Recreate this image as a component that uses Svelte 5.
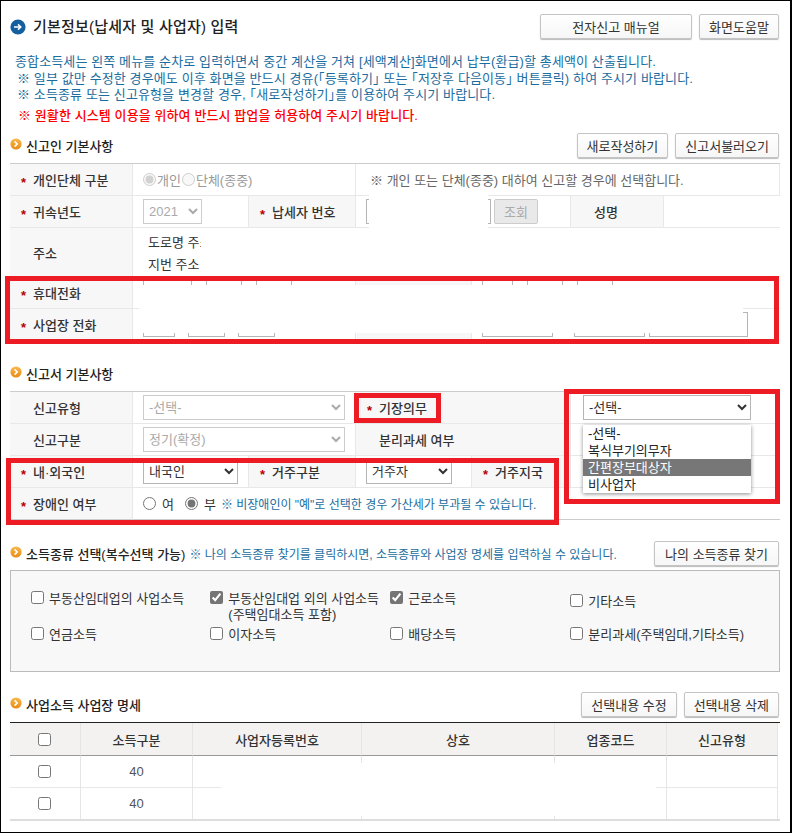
<script lang="ts">
  // overlays in page coordinates: blanked-out personal data and the red annotation frames
  const blanks = [
    { x: 369, y: 189, w: 119, h: 9 },
    { x: 369, y: 198, w: 119, h: 30 },
    { x: 201, y: 228, w: 579, h: 48 },
    { x: 139, y: 285, w: 604, h: 48 },
    { x: 221, y: 763, w: 435, h: 53 }
  ];
  const frames = [
    { x: 5, y: 276, w: 774, h: 68 },
    { x: 354, y: 393, w: 87, h: 30 },
    { x: 564, y: 389, w: 216, h: 115 },
    { x: 6, y: 458, w: 553, h: 67 }
  ];
  const kinds = [
    [
      { label: '부동산임대업의 사업소득', checked: false },
      { label: '부동산임대업 외의 사업소득', sub: '(주택임대소득 포함)', checked: true },
      { label: '근로소득', checked: true },
      { label: '기타소득', checked: false, low: true }
    ],
    [
      { label: '연금소득', checked: false },
      { label: '이자소득', checked: false },
      { label: '배당소득', checked: false },
      { label: '분리과세(주택임대,기타소득)', checked: false }
    ]
  ];
  const options = ['-선택-', '복식부기의무자', '간편장부대상자', '비사업자'];
  const headers = ['소득구분', '사업자등록번호', '상호', '업종코드', '신고유형'];
</script>

{#snippet bullet()}
  <svg class="bullet" width="12" height="12" viewBox="0 0 12 12">
    <defs>
      <linearGradient id="org" x1="0" y1="0" x2="0" y2="1">
        <stop offset="0" stop-color="#fbb84a" />
        <stop offset="1" stop-color="#e98a12" />
      </linearGradient>
    </defs>
    <circle cx="6" cy="6" r="5.6" fill="url(#org)" />
    <path d="M4.6 3.4 7.2 6 4.6 8.6" fill="none" stroke="#fff" stroke-width="1.6" />
  </svg>
{/snippet}

{#snippet star()}<span class="star">*</span>{/snippet}

<div class="page">
  <header class="top">
    <svg width="16" height="16" viewBox="0 0 16 16">
      <circle cx="8" cy="8" r="7.6" fill="#14609f" />
      <path d="M4 8h6.5M8 5.4 10.8 8 8 10.6" fill="none" stroke="#fff" stroke-width="1.5" />
    </svg>
    <h1>기본정보(납세자 및 사업자) 입력</h1>
    <button class="btn manual">전자신고 매뉴얼</button>
    <button class="btn help">화면도움말</button>
  </header>

  <div class="notes">
    <p class="first">종합소득세는 왼쪽 메뉴를 순차로 입력하면서 중간 계산을 거쳐 [세액계산]화면에서 납부(환급)할 총세액이 산출됩니다.</p>
    <p>※ 일부 값만 수정한 경우에도 이후 화면을 반드시 경유(｢등록하기｣ 또는 ｢저장후 다음이동｣ 버튼클릭) 하여 주시기 바랍니다.</p>
    <p>※ 소득종류 또는 신고유형을 변경할 경우, ｢새로작성하기｣를 이용하여 주시기 바랍니다.</p>
    <p class="warn">※ 원활한 시스템 이용을 위하여 반드시 팝업을 허용하여 주시기 바랍니다.</p>
  </div>

  <div class="sec">
    {@render bullet()}
    <h2>신고인 기본사항</h2>
    <span class="grow"></span>
    <button class="btn">새로작성하기</button>
    <button class="btn">신고서불러오기</button>
  </div>

  <table class="form">
    <colgroup><col class="c1" /><col class="c2" /><col class="c3" /><col class="c4" /><col class="c5" /><col class="c6" /><col class="c7" /></colgroup>
    <tbody>
      <tr>
        <th>{@render star()}개인단체 구분</th>
        <td colspan="2" class="off">
          <span class="radios">
            <input type="radio" name="who" checked disabled /><span>개인</span>
            <input type="radio" name="who" disabled /><span>단체(종중)</span>
          </span>
        </td>
        <td colspan="4" class="hint">※ 개인 또는 단체(종중) 대하여 신고할 경우에 선택합니다.</td>
      </tr>
      <tr>
        <th>{@render star()}귀속년도</th>
        <td><select class="year" disabled><option>2021</option></select></td>
        <th>{@render star()}납세자 번호</th>
        <td colspan="2">
          <div class="idrow">
            <input class="field idno" disabled />
            <button class="lookup" disabled>조회</button>
          </div>
        </td>
        <th class="plain">성명</th>
        <td class="last"></td>
      </tr>
      <tr class="addr">
        <th class="plain">주소</th>
        <td colspan="6" class="last">
          <div class="addrline">도로명 주소</div>
          <div class="addrline">지번 주소</div>
        </td>
      </tr>
      <tr>
        <th>{@render star()}휴대전화</th>
        <td colspan="2">
          <div class="phones">
            <input class="field w49" /><input class="field w36 g14" /><input class="field w36 g14" />
          </div>
        </td>
        <th></th>
        <td colspan="3" class="last">
          <div class="phones">
            <input class="field w31" /><input class="field w36 g14" /><input class="field w36 g14" />
          </div>
        </td>
      </tr>
      <tr>
        <th>{@render star()}사업장 전화</th>
        <td colspan="2">
          <div class="phones">
            <input class="field w32" /><input class="field w37 g13" /><input class="field w37 g13" />
          </div>
        </td>
        <th></th>
        <td colspan="3" class="last">
          <div class="phones">
            <input class="field w71" /><input class="field w71 g21" /><input class="field w99 g4" />
          </div>
        </td>
      </tr>
    </tbody>
  </table>

  <div class="sec second">
    {@render bullet()}
    <h2>신고서 기본사항</h2>
  </div>

  <table class="form closed">
    <colgroup><col class="c1" /><col class="c2" /><col class="c3" /><col class="c4" /><col class="c5" /><col class="c6" /><col class="c7" /></colgroup>
    <tbody>
      <tr>
        <th class="plain">신고유형</th>
        <td colspan="2"><select class="wide" disabled><option>-선택-</option></select></td>
        <th colspan="2">{@render star()}기장의무</th>
        <td colspan="2" class="last menu-cell">
          <select class="book"><option>-선택-</option></select>
          <ul class="menu">
            {#each options as opt, i}
              <li class:active={i === 2}>{opt}</li>
            {/each}
          </ul>
        </td>
      </tr>
      <tr>
        <th class="plain">신고구분</th>
        <td colspan="2"><select class="wide" disabled><option>정기(확정)</option></select></td>
        <th colspan="2" class="plain">분리과세 여부</th>
        <td colspan="2" class="last"></td>
      </tr>
      <tr>
        <th>{@render star()}내·외국인</th>
        <td><select class="nation"><option>내국인</option></select></td>
        <th>{@render star()}거주구분</th>
        <td><select class="resident"><option>거주자</option></select></td>
        <th>{@render star()}거주지국</th>
        <td colspan="2" class="last"></td>
      </tr>
      <tr>
        <th>{@render star()}장애인 여부</th>
        <td colspan="6" class="last">
          <div class="disabled-row">
            <input type="radio" name="dis" /><span class="lab">여</span>
            <input type="radio" name="dis" checked /><span class="lab">부</span>
            <span class="small-note">※ 비장애인이 "예"로 선택한 경우 가산세가 부과될 수 있습니다.</span>
          </div>
        </td>
      </tr>
    </tbody>
  </table>

  <div class="sec third">
    {@render bullet()}
    <h2>소득종류 선택(복수선택 가능)</h2>
    <span class="sec-note">※ 나의 소득종류 찾기를 클릭하시면, 소득종류와 사업장 명세를 입력하실 수 있습니다.</span>
    <span class="grow"></span>
    <button class="btn find">나의 소득종류 찾기</button>
  </div>

  <div class="kinds">
    {#each kinds as row}
      <div class="kind-row">
        {#each row as k}
          <label class="kind" class:low={k.low}>
            <input type="checkbox" checked={k.checked} />
            <span>{k.label}{#if k.sub}<br />{k.sub}{/if}</span>
          </label>
        {/each}
      </div>
    {/each}
  </div>

  <div class="sec fourth">
    {@render bullet()}
    <h2>사업소득 사업장 명세</h2>
    <span class="grow"></span>
    <button class="btn">선택내용 수정</button>
    <button class="btn">선택내용 삭제</button>
  </div>

  <div class="list-wrap">
    <table class="list">
      <colgroup><col class="l1" /><col class="l2" /><col class="l3" /><col class="l4" /><col class="l5" /><col class="l6" /></colgroup>
      <thead>
        <tr>
          <th class="check"><input type="checkbox" /></th>
          {#each headers as h}<th>{h}</th>{/each}
        </tr>
      </thead>
      <tbody>
        {#each [0, 1] as _}
          <tr>
            <td class="check"><input type="checkbox" /></td>
            <td>40</td>
            <td></td><td></td><td></td><td></td>
          </tr>
        {/each}
      </tbody>
    </table>
  </div>

  {#each blanks as b}
    <div class="blank" style="left:{b.x}px;top:{b.y}px;width:{b.w}px;height:{b.h}px"></div>
  {/each}
  {#each frames as f}
    <div class="frame" style="left:{f.x}px;top:{f.y}px;width:{f.w}px;height:{f.h}px"></div>
  {/each}
</div>

<style>
  :global(body) { margin: 0; background: #fff; }

  .page {
    position: relative;
    box-sizing: border-box;
    width: 792px;
    height: 833px;
    overflow: hidden;
    border: 1px solid #000;
    border-right-width: 2px;
    padding: 13px 0 0 9px;
    font-family: "Liberation Sans", "Noto Sans CJK KR", sans-serif;
    font-size: 13px;
    color: #333;
    accent-color: #757575;
  }
  .page > * { width: 770px; }
  .page > .blank, .page > .frame { position: absolute; }
  /* page is border-box with a 1px border, overlays are given in page coordinates */
  .blank { background: #fff; margin: -1px 0 0 -1px; }
  .frame { box-sizing: border-box; border: 5px solid #ed1c24; margin: -1px 0 0 -1px; }

  .top { display: flex; align-items: center; height: 25px; }
  .top h1 { margin: 0 0 0 7px; flex: 1; font-size: 15px; letter-spacing: 0.2px; line-height: 25px; font-weight: 500; color: #222; }

  .btn {
    box-sizing: border-box;
    height: 25px;
    margin-left: 7px;
    padding: 0 9px;
    border: 1px solid #c4c4c4;
    border-radius: 2px;
    background: linear-gradient(#fff, #f6f6f6);
    box-shadow: 0 1px 1px #bbb;
    font: inherit;
    color: #333;
    white-space: nowrap;
  }
  .manual { width: 152px; }
  .help { width: 80px; }
  .find { padding: 0 10px; }
  .top .btn:last-child { margin-right: 1px; }
  .sec .btn:last-child { margin-right: 1px; }

  .notes { margin-top: 15px; font-size: 13px; letter-spacing: 0.12px; line-height: 16.5px; color: #1a6d9e; }
  .notes p { margin: 0; padding-left: 7px; white-space: nowrap; }
  .notes .first { padding-left: 5px; }
  .notes .warn { margin-top: 4px; padding-left: 8px; letter-spacing: 0.1px; font-weight: 500; color: #f00; }

  .sec { display: flex; align-items: center; height: 25px; margin-top: 9px; margin-bottom: 5px; }
  .bullet { flex: none; margin-right: 4px; margin-top: -3px; }
  .sec h2 { margin: 0; font-size: 13px; font-weight: 500; color: #222; white-space: nowrap; }
  .grow { flex: 1; }
  .second { margin-top: 20px; }
  .third { margin-top: 21px; margin-bottom: 4px; }
  .fourth { margin-top: 20px; }
  .sec-note { margin-left: 4px; font-size: 12px; color: #1a6d9e; white-space: nowrap; }

  table { border-collapse: separate; border-spacing: 0; table-layout: fixed; }
  .c1 { width: 123px; } .c2 { width: 116px; } .c3 { width: 107px; } .c4 { width: 116px; }
  .c5 { width: 99px; } .c6 { width: 93px; } .c7 { width: 116px; }

  .form { border-top: 1px solid #ccc; }
  .form th, .form td {
    box-sizing: border-box;
    height: 32px;
    padding: 0;
    border-bottom: 1px solid #e8e8e8;
    border-right: 1px solid #e8e8e8;
    font-size: 13px;
  }
  .form th {
    padding-left: 11px;
    background: #f7f7f7;
    text-align: left;
    font-weight: 500;
    color: #333;
    white-space: nowrap;
  }
  .form th.plain { padding-left: 23px; }
  .form td { padding-left: 10px; }
  .form td.last { border-right: 0; }
  .form.closed tr:last-child th, .form.closed tr:last-child td { border-bottom-color: #ccc; }
  .addr th, .addr td { height: 49px; }
  .addr td { padding-top: 4px; }
  .form td.last:empty { padding: 0; }

  .star { display: inline-block; width: 12px; position: relative; top: 2px; color: #b80000; font-weight: 700; }

  select {
    box-sizing: border-box;
    height: 25px;
    display: block;
    padding-left: 1px;
    border: 1px solid #b5b5b5;
    border-radius: 0;
    background-color: #fff;
    font: inherit;
    color: #333;
    opacity: 1;
  }
  select:disabled { color: #aaa; border-color: #ccc; }
  .year { width: 59px; }
  .wide { width: 202px; }
  .book { width: 168px; }
  .nation { width: 95px; }
  .resident { width: 86px; }
  td.menu-cell { position: relative; padding-left: 12px; }

  .menu {
    position: absolute;
    z-index: 2;
    top: 33px;
    left: 12px;
    width: 168px;
    box-sizing: border-box;
    margin: 0;
    padding: 0;
    list-style: none;
    background: #fff;
    box-shadow: 0 1px 4px rgba(0, 0, 0, 0.45);
  }
  .menu li { height: 17px; line-height: 17px; padding-left: 5px; color: #222; }
  .menu li.active { background: #777; color: #fff; }

  .radios, .disabled-row { display: flex; align-items: center; }
  input[type="radio"], input[type="checkbox"] { margin: 0; flex: none; }
  .off { color: #999; }
  .radios span { margin: 0 1px; }
  .hint { padding-top: 5px; padding-left: 14px !important; color: #666; white-space: nowrap; }

  .idrow { display: flex; gap: 3px; }
  .field {
    box-sizing: border-box;
    height: 25px;
    padding: 0;
    border: 1px solid #b5b5b5;
    background: #fff;
    flex: none;
  }
  .idno { width: 125px; }
  .lookup {
    width: 44px;
    height: 25px;
    padding: 0;
    border: 1px solid #ccc;
    border-radius: 2px;
    background: #e9e9e9;
    font: inherit;
    color: #aaa;
  }
  .addrline { height: 22px; line-height: 22px; padding-left: 5px; color: #333; }

  .phones { display: flex; }
  .w31 { width: 31px; } .w32 { width: 32px; } .w36 { width: 36px; } .w37 { width: 37px; }
  .w49 { width: 49px; } .w71 { width: 71px; } .w99 { width: 99px; }
  .g4 { margin-left: 4px; } .g13 { margin-left: 13px; } .g14 { margin-left: 14px; } .g21 { margin-left: 21px; }

  .disabled-row .lab { margin: 0 11px 0 6px; color: #333; }
  .small-note { margin-left: -6px; font-size: 12px; color: #1a6d9e; white-space: nowrap; }

  .kinds {
    box-sizing: border-box;
    height: 102px;
    padding: 20px 0 0 20px;
    border: 1px solid #bbb;
    background: #f8f8f8;
  }
  .kind-row { display: flex; height: 36px; }
  .kind { display: flex; align-items: flex-start; gap: 5px; width: 180px; line-height: 16px; white-space: nowrap; color: #333; }
  .kind:first-child { width: 179.3px; }
  .kind.low { padding-top: 3px; }
  .kind input { margin-top: 0; }

  .list-wrap { border-top: 1px solid #222; border-bottom: 2px solid #ddd; }
  .list { width: 768px; }
  .l1 { width: 71px; } .l2 { width: 112px; } .l3 { width: 169px; } .l4 { width: 193px; }
  .l5 { width: 112px; } .l6 { width: 111px; }
  .list th, .list td {
    box-sizing: border-box;
    padding: 0;
    text-align: center;
    border-right: 1px solid #e5e5e5;
    font-size: 13px;
  }
  .list th { height: 33px; background: #f3f2f1; border-bottom: 1px solid #999; font-weight: 500; color: #333; }
  .list td { height: 32px; border-bottom: 1px solid #e8e8e8; color: #555; font-size: 13px; }
  .list tr:last-child td { height: 31px; border-bottom: 0; }
  .list .check { padding-right: 1px; }
  .list input { display: block; margin: 0 auto; }
</style>
